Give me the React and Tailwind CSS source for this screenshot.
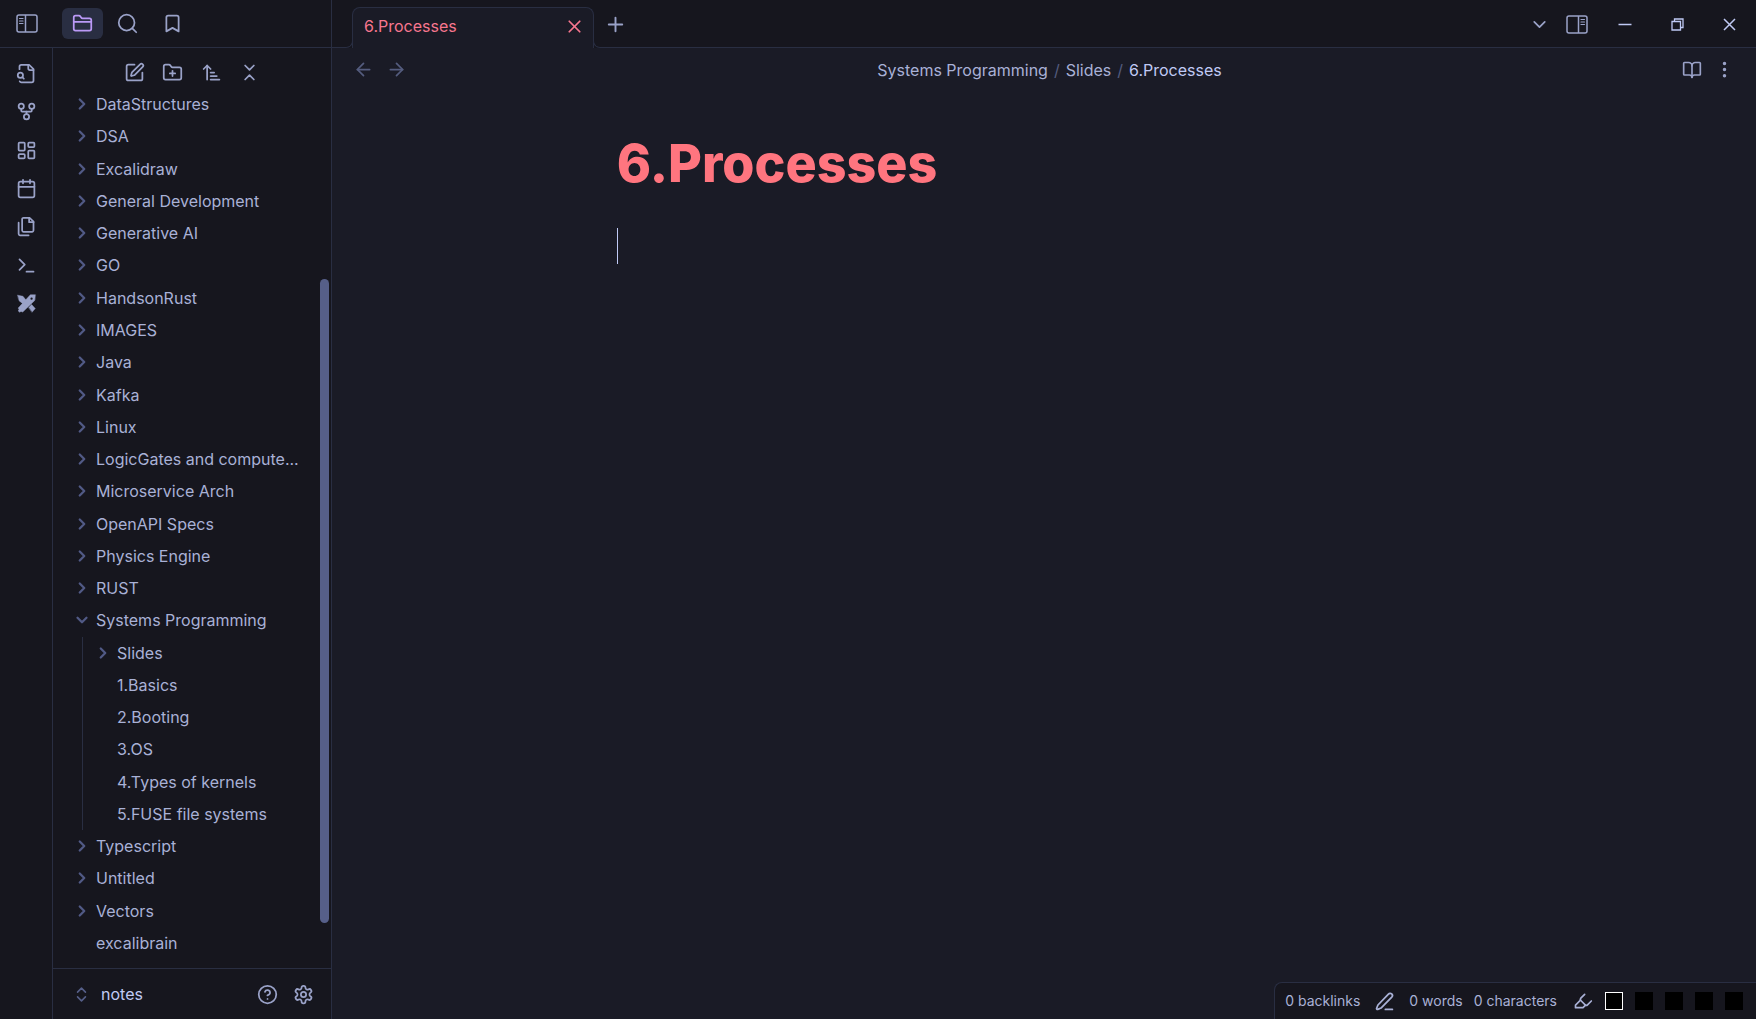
import React from "react";

function Icon({ size = 21, stroke = 2, className = "", children }) {
  return (
    <svg
      width={size}
      height={size}
      viewBox="0 0 24 24"
      fill="none"
      stroke="currentColor"
      strokeWidth={stroke}
      strokeLinecap="round"
      strokeLinejoin="round"
      aria-hidden="true"
      className={`shrink-0 ${className}`}
    >
      {children}
    </svg>
  );
}

const glyphs = {
  folder: (
    <>
      <path d="M4 20h16a2 2 0 0 0 2-2V8a2 2 0 0 0-2-2h-7.93a2 2 0 0 1-1.66-.9l-.82-1.2A2 2 0 0 0 7.93 3H4a2 2 0 0 0-2 2v13c0 1.1.9 2 2 2Z" />
      <path d="M2 10h20" />
    </>
  ),
  search: (
    <>
      <circle cx="11" cy="11" r="9" />
      <path d="m22 22-4.500-4.500" />
    </>
  ),
  bookmark: <path d="m19 21-7-4-7 4V5a2 2 0 0 1 2-2h10a2 2 0 0 1 2 2v16z" />,
  fileSearch: (
    <>
      <path d="M14 2v4a2 2 0 0 0 2 2h4" />
      <path d="M4.268 21a2 2 0 0 0 1.727 1H18a2 2 0 0 0 2-2V7l-5-5H6a2 2 0 0 0-2 2v3" />
      <path d="m9 18-1.5-1.5" />
      <circle cx="5" cy="14" r="3" />
    </>
  ),
  fork: (
    <>
      <circle cx="12" cy="18" r="3" />
      <circle cx="6" cy="6" r="3" />
      <circle cx="18" cy="6" r="3" />
      <path d="M18 9v2c0 .6-.4 1-1 1H7c-.6 0-1-.4-1-1V9" />
      <path d="M12 12v3" />
    </>
  ),
  dashboard: (
    <>
      <rect width="7" height="9" x="3" y="3" rx="1" />
      <rect width="7" height="5" x="14" y="3" rx="1" />
      <rect width="7" height="9" x="14" y="12" rx="1" />
      <rect width="7" height="5" x="3" y="16" rx="1" />
    </>
  ),
  calendar: (
    <>
      <path d="M8 2v4" />
      <path d="M16 2v4" />
      <rect width="18" height="18" x="3" y="4" rx="2" />
      <path d="M3 10h18" />
    </>
  ),
  files: (
    <>
      <path d="M15.5 2H8.6c-.4 0-.8.2-1.1.5-.3.3-.5.7-.5 1.1v12.8c0 .4.2.8.5 1.1.3.3.7.5 1.1.5h9.8c.4 0 .8-.2 1.1-.5.3-.3.5-.7.5-1.1V6.5L15.5 2z" />
      <path d="M3 7.6v12.8c0 .4.2.8.5 1.1.3.3.7.5 1.1.5h9.8" />
      <path d="M15 2v5h5" />
    </>
  ),
  terminal: (
    <>
      <path d="m4 17 6-6-6-6" />
      <path d="M12 19h8" />
    </>
  ),
  draw: (
    <g fill="currentColor" strokeWidth="0.500">
      <path d="M2 2.500 8 3.800l3.600 4.500-3.700 3.900L3.700 9Z" />
      <path d="m14.600 16.500 3.200-3.400 4.200 4.700-3.500 4Z" />
      <path d="M22 2h-5.600L2.500 17.200l1 1.800-1.200 1.200 1.900 1.800 1.500-1 2 .8L21.400 8.500Z" />
      <circle cx="17.800" cy="6.500" r="1.300" fill="#16161e" stroke="none" />
    </g>
  ),
  edit: (
    <>
      <path d="M12 3H5a2 2 0 0 0-2 2v14a2 2 0 0 0 2 2h14a2 2 0 0 0 2-2v-7" />
      <path d="M18.375 2.625a1 1 0 0 1 3 3l-9.013 9.014a2 2 0 0 1-.853.505l-2.873.84a.5.5 0 0 1-.62-.62l.84-2.873a2 2 0 0 1 .506-.852z" />
    </>
  ),
  folderPlus: (
    <>
      <path d="M12 10v6" />
      <path d="M9 13h6" />
      <path d="M20 20a2 2 0 0 0 2-2V8a2 2 0 0 0-2-2h-7.900a2 2 0 0 1-1.690-.9L9.600 3.900A2 2 0 0 0 7.930 3H4a2 2 0 0 0-2 2v13a2 2 0 0 0 2 2Z" />
    </>
  ),
  sort: (
    <>
      <path d="m3 8 4-4 4 4" />
      <path d="M7 4v16" />
      <path d="M11 12h4" />
      <path d="M11 16h7" />
      <path d="M11 20h10" />
    </>
  ),
  collapse: (
    <>
      <path d="m7 20 5-5 5 5" />
      <path d="m7 4 5 5 5-5" />
    </>
  ),
  right: <path d="m9 18 6-6-6-6" />,
  down: <path d="m6 9 6 6 6-6" />,
  upDown: (
    <>
      <path d="m7 15 5 5 5-5" />
      <path d="m7 9 5-5 5 5" />
    </>
  ),
  help: (
    <>
      <circle cx="12" cy="12" r="10" />
      <path d="M9.090 9a3 3 0 0 1 5.830 1c0 2-3 3-3 3" />
      <path d="M12 17h.01" />
    </>
  ),
  gear: (
    <>
      <path d="M12.220 2h-.44a2 2 0 0 0-2 2v.18a2 2 0 0 1-1 1.730l-.43.25a2 2 0 0 1-2 0l-.15-.08a2 2 0 0 0-2.730.730l-.22.38a2 2 0 0 0 .73 2.730l.15.1a2 2 0 0 1 1 1.720v.51a2 2 0 0 1-1 1.740l-.15.09a2 2 0 0 0-.73 2.730l.22.38a2 2 0 0 0 2.730.730l.15-.08a2 2 0 0 1 2 0l.43.25a2 2 0 0 1 1 1.730V20a2 2 0 0 0 2 2h.44a2 2 0 0 0 2-2v-.18a2 2 0 0 1 1-1.730l.43-.25a2 2 0 0 1 2 0l.15.08a2 2 0 0 0 2.730-.73l.22-.39a2 2 0 0 0-.73-2.730l-.15-.08a2 2 0 0 1-1-1.740v-.5a2 2 0 0 1 1-1.740l.15-.09a2 2 0 0 0 .73-2.730l-.22-.38a2 2 0 0 0-2.730-.73l-.15.08a2 2 0 0 1-2 0l-.43-.25a2 2 0 0 1-1-1.730V4a2 2 0 0 0-2-2z" />
      <circle cx="12" cy="12" r="3" />
    </>
  ),
  close: (
    <>
      <path d="M18 6 6 18" />
      <path d="m6 6 12 12" />
    </>
  ),
  plus: (
    <>
      <path d="M5 12h14" />
      <path d="M12 5v14" />
    </>
  ),
  arrowLeft: (
    <>
      <path d="m12 19-7-7 7-7" />
      <path d="M19 12H5" />
    </>
  ),
  arrowRight: (
    <>
      <path d="M5 12h14" />
      <path d="m12 5 7 7-7 7" />
    </>
  ),
  book: (
    <>
      <path d="M12 7v14" />
      <path d="M3 18a1 1 0 0 1-1-1V4a1 1 0 0 1 1-1h5a4 4 0 0 1 4 4 4 4 0 0 1 4-4h5a1 1 0 0 1 1 1v13a1 1 0 0 1-1 1h-6a3 3 0 0 0-3 3 3 3 0 0 0-3-3z" />
    </>
  ),
  dots: (
    <g fill="currentColor">
      <circle cx="12" cy="12" r="1" />
      <circle cx="12" cy="5" r="1" />
      <circle cx="12" cy="19" r="1" />
    </g>
  ),
  pen: (
    <>
      <path d="M13 21h8" />
      <path d="M16.500 3.500a2.600 2.600 0 0 1 3.800 3.600L8 19.500 4.300 21a1 1 0 0 1-1.300-1.300L4.500 16Z" />
    </>
  ),
  highlighter: (
    <>
      <path d="m9 11-6 6v3h9l3-3" />
      <path d="m22 12-4.600 4.600a2 2 0 0 1-2.800 0l-5.200-5.200a2 2 0 0 1 0-2.800L14 4" />
    </>
  ),
};

function PanelIcon({ flipped }) {
  return (
    <svg
      width="22"
      height="19"
      viewBox="0 0 22 19"
      fill="none"
      stroke="currentColor"
      strokeWidth="1.5"
      aria-hidden="true"
      className={flipped ? "-scale-x-100" : ""}
    >
      <rect x="1" y="1" width="20" height="17" rx="2" />
      <path d="M9.500 1v17" />
      <path d="M3.500 4.500h3.500M3.500 7h3.500M3.500 9.500h3.500" strokeWidth="1.200" strokeLinecap="round" />
    </svg>
  );
}

function IconButton({ label, className = "", children }) {
  return (
    <button type="button" aria-label={label} className={`flex shrink-0 items-center justify-center ${className}`}>
      {children}
    </button>
  );
}

const ribbon = [
  ["Open quick switcher", "fileSearch"],
  ["Open graph view", "fork"],
  ["Create new canvas", "dashboard"],
  ["Open daily note", "calendar"],
  ["Insert template", "files"],
  ["Open command palette", "terminal"],
  ["New drawing", "draw"],
];

const actions = [
  ["New note", "edit"],
  ["New folder", "folderPlus"],
  ["Change sort order", "sort"],
  ["Collapse all", "collapse"],
];

const tree = [
  { name: "DataStructures", folder: true },
  { name: "DSA", folder: true },
  { name: "Excalidraw", folder: true },
  { name: "General Development", folder: true },
  { name: "Generative AI", folder: true },
  { name: "GO", folder: true },
  { name: "HandsonRust", folder: true },
  { name: "IMAGES", folder: true },
  { name: "Java", folder: true },
  { name: "Kafka", folder: true },
  { name: "Linux", folder: true },
  { name: "LogicGates and compute...", folder: true },
  { name: "Microservice Arch", folder: true },
  { name: "OpenAPI Specs", folder: true },
  { name: "Physics Engine", folder: true },
  { name: "RUST", folder: true },
  {
    name: "Systems Programming",
    folder: true,
    children: [
      { name: "Slides", folder: true },
      { name: "1.Basics" },
      { name: "2.Booting" },
      { name: "3.OS" },
      { name: "4.Types of kernels" },
      { name: "5.FUSE file systems" },
    ],
  },
  { name: "Typescript", folder: true },
  { name: "Untitled", folder: true },
  { name: "Vectors", folder: true },
  { name: "excalibrain" },
];

function Row({ item }) {
  return (
    <button type="button" className="flex min-h-0 w-full flex-1 items-center text-left whitespace-nowrap">
      <span className="flex w-[23px] shrink-0 items-center text-[#515a86]">
        {item.folder && (
          <Icon size={18} stroke={3}>
            {item.children ? glyphs.down : glyphs.right}
          </Icon>
        )}
      </span>
      {item.name}
    </button>
  );
}

function Node({ item }) {
  if (!item.children) {
    return (
      <li className="flex min-h-0 flex-1">
        <Row item={item} />
      </li>
    );
  }
  return (
    <li className="flex min-h-0 flex-[7] flex-col">
      <Row item={item} />
      <ul className="ml-[9px] flex min-h-0 flex-[6] flex-col border-l border-[#292e42] pl-[11px]">
        {item.children.map((c) => (
          <Node key={c.name} item={c} />
        ))}
      </ul>
    </li>
  );
}

export default function App() {
  return (
    <div className="flex h-screen flex-col overflow-hidden bg-[#1a1b26] font-['Inter',sans-serif] text-base text-[#a9b1d6]">
      <header className="flex h-12 shrink-0 text-[#9aa2c8]">
        <div className="flex w-[332px] shrink-0 items-center border-r border-b border-[#292e42] bg-[#16161e] pl-4">
          <IconButton label="Toggle left sidebar" className="mr-6">
            <PanelIcon />
          </IconButton>
          <IconButton label="Files" className="h-[31px] w-[41px] rounded-md bg-[#292e42] text-[#bb9af7]">
            <Icon>{glyphs.folder}</Icon>
          </IconButton>
          <IconButton label="Search" className="ml-1 h-[31px] w-[41px]">
            <Icon>{glyphs.search}</Icon>
          </IconButton>
          <IconButton label="Bookmarks" className="ml-1 h-[31px] w-[41px]">
            <Icon>{glyphs.bookmark}</Icon>
          </IconButton>
        </div>
        <div className="flex min-w-0 flex-1 items-end bg-[#16161e]">
          <div className="h-full w-3.5 border-b border-[#292e42]" />
          <div className="h-2 w-[7px] overflow-hidden rounded-br-lg border-r border-b border-[#292e42] bg-[#16161e]" />
          <div className="-ml-px flex h-[41px] w-[242px] items-center justify-between rounded-t-lg border-x border-t border-[#292e42] bg-[#1a1b26] pr-2 pb-1 pl-[11px] text-[#f7768e]">
            <span>6.Processes</span>
            <IconButton label="Close tab">
              <Icon size={21}>{glyphs.close}</Icon>
            </IconButton>
          </div>
          <div className="-ml-px h-2 w-[7px] rounded-bl-lg border-b border-l border-[#292e42] bg-[#16161e]" />
          <div className="flex h-full min-w-0 flex-1 items-center border-b border-[#292e42] pt-px">
            <IconButton label="New tab" className="ml-1">
              <Icon size={23}>{glyphs.plus}</Icon>
            </IconButton>
            <div className="ml-auto flex items-center pr-px">
              <IconButton label="Tab list">
                <Icon size={21}>{glyphs.down}</Icon>
              </IconButton>
              <IconButton label="Toggle right sidebar" className="ml-4">
                <PanelIcon flipped />
              </IconButton>
              <div className="ml-[11px] flex text-[#c0caf5]">
                <IconButton label="Minimize" className="h-10 w-[52px]">
                  <svg width="14" height="14" viewBox="0 0 14 14" stroke="currentColor" strokeWidth="1.500" aria-hidden="true">
                    <path d="M0.500 7.500h13" />
                  </svg>
                </IconButton>
                <IconButton label="Restore" className="h-10 w-[52px]">
                  <svg width="13" height="13" viewBox="0 0 13 13" fill="none" stroke="currentColor" strokeWidth="1.300" aria-hidden="true">
                    <path d="M1 3.500h8.500v8.500H1zM3.500 3V1H12v8.500H10" />
                  </svg>
                </IconButton>
                <IconButton label="Close" className="h-10 w-[52px]">
                  <svg width="13" height="13" viewBox="0 0 13 13" stroke="currentColor" strokeWidth="1.500" aria-hidden="true">
                    <path d="m1 1 11 11M12 1 1 12" />
                  </svg>
                </IconButton>
              </div>
            </div>
          </div>
        </div>
      </header>

      <div className="flex min-h-0 flex-1">
        <nav aria-label="Ribbon" className="w-[53px] shrink-0 border-r border-[#292e42] bg-[#16161e] pt-1.5 text-[#9aa2c8]">
          <div className="flex h-[269px] flex-col">
            {ribbon.map(([label, icon]) => (
              <IconButton key={label} label={label} className="min-h-0 flex-1">
                <Icon>{glyphs[icon]}</Icon>
              </IconButton>
            ))}
          </div>
        </nav>

        <aside className="flex w-[279px] shrink-0 flex-col border-r border-[#292e42] bg-[#16161e]">
          <div className="mx-auto flex h-10 w-[154px] shrink-0 items-end pb-[5px] text-[#9aa2c8]">
            {actions.map(([label, icon]) => (
              <IconButton key={label} label={label} className="flex-1">
                <Icon>{glyphs[icon]}</Icon>
              </IconButton>
            ))}
          </div>
          <div className="flex min-h-0 flex-1 pr-0.5">
            <ul className="mb-[9px] ml-5 flex min-w-0 flex-1 flex-col">
              {tree.map((item) => (
                <Node key={item.name} item={item} />
              ))}
            </ul>
            <div className="flex w-[9px] flex-col">
              <div className="flex-[191]" />
              <div className="flex-[644] rounded-full bg-[#565f89]" />
              <div className="flex-[45]" />
            </div>
          </div>
          <div className="flex h-[51px] shrink-0 items-center border-t border-[#292e42] pr-[17px] pl-[19px]">
            <button type="button" className="flex items-center gap-2.5 text-[#c0caf5]">
              <Icon size={19} className="text-[#565f89]">
                {glyphs.upDown}
              </Icon>
              notes
            </button>
            <IconButton label="Help" className="ml-auto text-[#9aa2c8]">
              <Icon>{glyphs.help}</Icon>
            </IconButton>
            <IconButton label="Settings" className="ml-[15px] text-[#9aa2c8]">
              <Icon>{glyphs.gear}</Icon>
            </IconButton>
          </div>
        </aside>

        <main className="flex min-w-0 flex-1 flex-col">
          <div className="flex h-[43px] shrink-0 items-center px-[21px]">
            <div className="flex w-16 gap-3 text-[#545c7e]">
              <IconButton label="Back">
                <Icon size={21}>{glyphs.arrowLeft}</Icon>
              </IconButton>
              <IconButton label="Forward">
                <Icon size={21}>{glyphs.arrowRight}</Icon>
              </IconButton>
            </div>
            <div className="flex flex-1 items-center justify-center gap-1.5">
              <a href="#systems">Systems Programming</a>
              <span className="text-[#545c7e]">/</span>
              <a href="#slides">Slides</a>
              <span className="text-[#545c7e]">/</span>
              <span className="text-[#c0caf5]">6.Processes</span>
            </div>
            <div className="flex gap-3 text-[#9aa2c8]">
              <IconButton label="Reading view">
                <Icon size={20}>{glyphs.book}</Icon>
              </IconButton>
              <IconButton label="More options">
                <Icon size={21}>{glyphs.dots}</Icon>
              </IconButton>
            </div>
          </div>
          <article className="mx-auto w-[60%] flex-1 pt-[41px]">
            <h1 className="text-[52px] leading-16 font-extrabold text-[#ff757f]">6.Processes</h1>
            <div className="mt-8 h-9 border-l border-[#c0caf5]" />
          </article>
          <footer className="flex h-[37px] shrink-0 items-center self-end rounded-tl-lg border-t border-l border-[#292e42] bg-[#16161e] pr-[13px] pl-2.5 text-sm">
            <span>0 backlinks</span>
            <IconButton label="Editing mode" className="mx-3.5">
              <Icon>{glyphs.pen}</Icon>
            </IconButton>
            <span>0 words</span>
            <span className="ml-[11px]">0 characters</span>
            <IconButton label="Highlight" className="mr-3 ml-4">
              <Icon size={20}>{glyphs.highlighter}</Icon>
            </IconButton>
            <div className="flex gap-3">
              <button type="button" aria-label="Color 1" className="size-[18px] border border-white bg-black" />
              <button type="button" aria-label="Color 2" className="size-[18px] bg-black" />
              <button type="button" aria-label="Color 3" className="size-[18px] bg-black" />
              <button type="button" aria-label="Color 4" className="size-[18px] bg-black" />
              <button type="button" aria-label="Color 5" className="size-[18px] bg-black" />
            </div>
          </footer>
        </main>
      </div>
    </div>
  );
}
